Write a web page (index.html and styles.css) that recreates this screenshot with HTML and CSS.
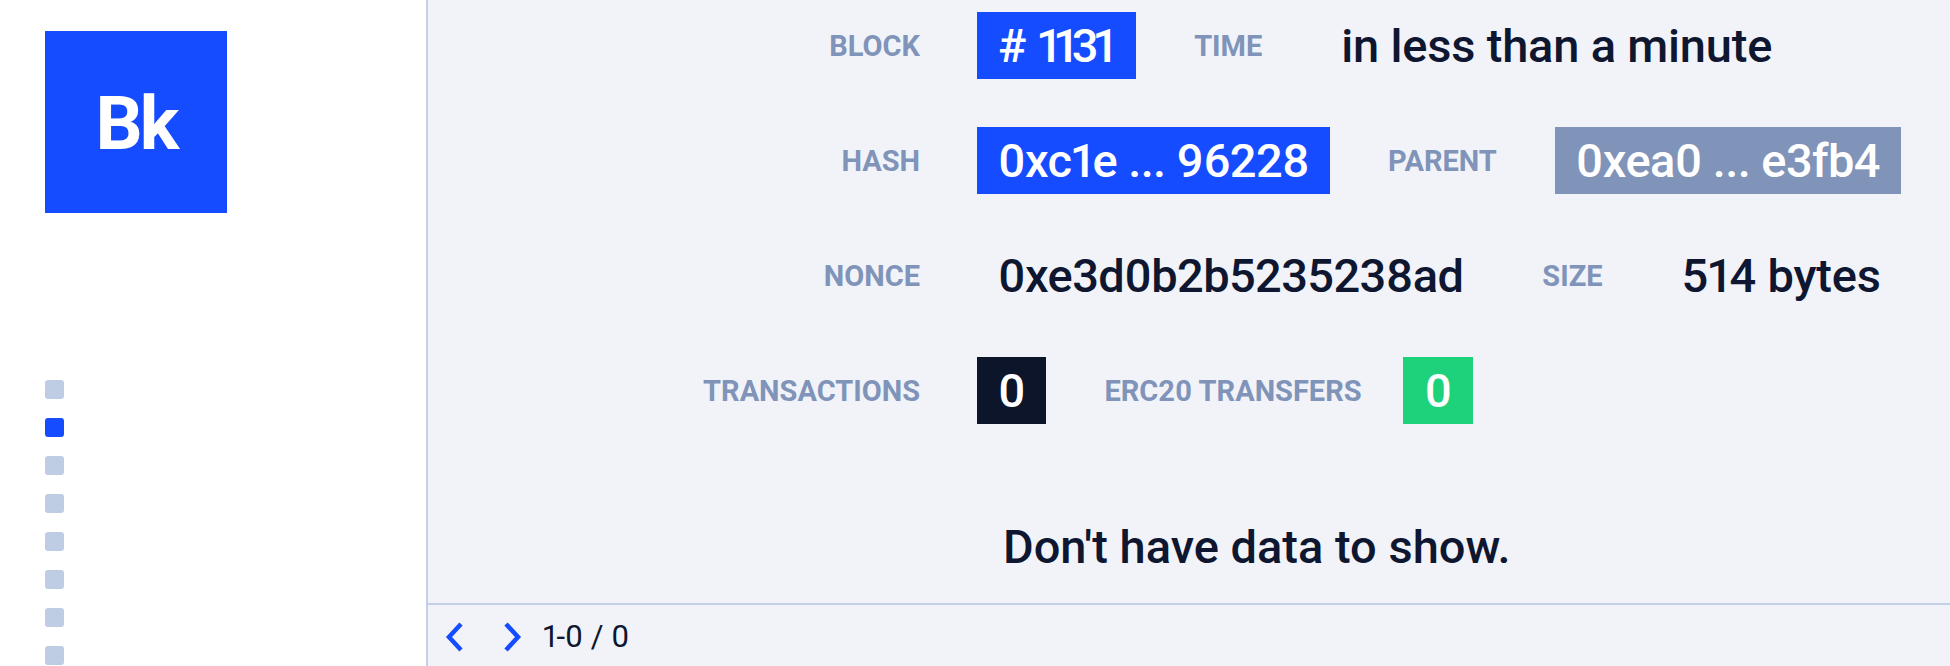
FILE: index.html
```html
<!DOCTYPE html>
<html lang="en">
<head>
<meta charset="utf-8">
<title>Block 1131</title>
<link rel="stylesheet" href="styles.css">
</head>
<body>
<div class="app">
  <aside class="sidebar">
    <div class="logo">Bk</div>
    <nav class="nav">
      <span class="nav-dot"></span>
      <span class="nav-dot nav-dot--active"></span>
      <span class="nav-dot"></span>
      <span class="nav-dot"></span>
      <span class="nav-dot"></span>
      <span class="nav-dot"></span>
      <span class="nav-dot"></span>
      <span class="nav-dot"></span>
    </nav>
  </aside>
  <main class="main">
    <section class="content">
      <div class="details">
        <div class="row">
          <span class="label label--first">BLOCK</span>
          <span class="value value--blue">#&nbsp;<span class="digits">1131</span></span>
          <span class="label">TIME</span>
          <span class="value">in less than a minute</span>
        </div>
        <div class="row">
          <span class="label label--first">HASH</span>
          <span class="value value--blue value--hex">0xc1e ... 96228</span>
          <span class="label">PARENT</span>
          <span class="value value--grey value--hex">0xea0 ... e3fb4</span>
        </div>
        <div class="row">
          <span class="label label--first">NONCE</span>
          <span class="value value--hex">0xe3d0b2b5235238ad</span>
          <span class="label">SIZE</span>
          <span class="value">514 bytes</span>
        </div>
        <div class="row">
          <span class="label label--first">TRANSACTIONS</span>
          <span class="value value--dark">0</span>
          <span class="label">ERC20 TRANSFERS</span>
          <span class="value value--green">0</span>
        </div>
      </div>
      <p class="empty">Don't have data to show.</p>
    </section>
    <footer class="pager">
      <button class="pager-btn pager-btn--prev" aria-label="Previous page">
        <svg width="20" height="30" viewBox="0 0 20 30"><polyline points="17,2 5,15 17,28" fill="none" stroke="#164cff" stroke-width="4.5"/></svg>
      </button>
      <button class="pager-btn" aria-label="Next page">
        <svg width="20" height="30" viewBox="0 0 20 30"><polyline points="3,2 15,15 3,28" fill="none" stroke="#164cff" stroke-width="4.5"/></svg>
      </button>
      <span class="pager-text">1-0 / 0</span>
    </footer>
  </main>
</div>
</body>
</html>
```

FILE: styles.css
```css
* { box-sizing: border-box; }

html, body {
  margin: 0;
  padding: 0;
  height: 100%;
}

body {
  font-family: Roboto, "Liberation Sans", sans-serif;
  color: #0e1630;
  background: #f1f3f8;
  overflow: hidden;
  font-variant-numeric: proportional-nums;
}

.app {
  display: flex;
  height: 666px;
}

.sidebar {
  width: 428px;
  flex: none;
  background: #ffffff;
  border-right: 2px solid #c3cfe5;
  padding: 31px 0 0 45px;
}

.logo {
  width: 182px;
  height: 182px;
  background: #164cff;
  color: #ffffff;
  font-weight: 700;
  font-size: 74px;
  letter-spacing: -3px;
  display: flex;
  align-items: center;
  justify-content: center;
  padding-top: 2px;
}

.nav {
  display: flex;
  flex-direction: column;
  gap: 19px;
  margin-top: 167px;
}

.nav-dot {
  display: block;
  width: 19px;
  height: 19px;
  border-radius: 3px;
  background: #bfcde4;
}

.nav-dot--active {
  background: #164cff;
}

.main {
  flex: 1;
  display: flex;
  flex-direction: column;
  min-width: 0;
}

.content {
  flex: 1;
  padding: 12px 0 0 252px;
}

.details {
  display: flex;
  flex-direction: column;
  gap: 48px;
}

.row {
  display: flex;
  align-items: center;
  gap: 58px;
  height: 67px;
}

.label {
  font-size: 29px;
  font-weight: 700;
  color: #8094ba;
  white-space: nowrap;
  max-width: 241px;
}

.label--first {
  width: 240px;
  text-align: right;
  margin-right: -1px;
}

.value {
  font-size: 47px;
  font-weight: 500;
  line-height: 67px;
  height: 67px;
  padding: 0 21px;
  white-space: nowrap;
  color: #0e1630;
  letter-spacing: -0.2px;
}

.value--hex {
  letter-spacing: -0.6px;
}

.digits {
  letter-spacing: -4.5px;
  margin-right: 4px;
}

.value--blue {
  background: #164cff;
  color: #ffffff;
}

.value--grey {
  background: #8093b8;
  color: #ffffff;
}

.value--dark {
  background: #0d152b;
  color: #ffffff;
}

.value--green {
  background: #1ed27c;
  color: #ffffff;
}

.empty {
  margin: 95px 0 0 323px;
  font-size: 47px;
  font-weight: 500;
  line-height: 56px;
}

.pager {
  height: 63px;
  flex: none;
  border-top: 2px solid #c3cfe5;
  display: flex;
  align-items: center;
  padding: 2px 0 0 16px;
}

.pager-btn {
  background: none;
  border: 0;
  padding: 0;
  margin: 0 19px 0 0;
  width: 20px;
  height: 30px;
  display: flex;
  cursor: pointer;
}

.pager-btn--prev {
  margin-right: 39px;
}

.pager-text {
  font-size: 31px;
  color: #0e1630;
  margin-left: 1px;
}
```
